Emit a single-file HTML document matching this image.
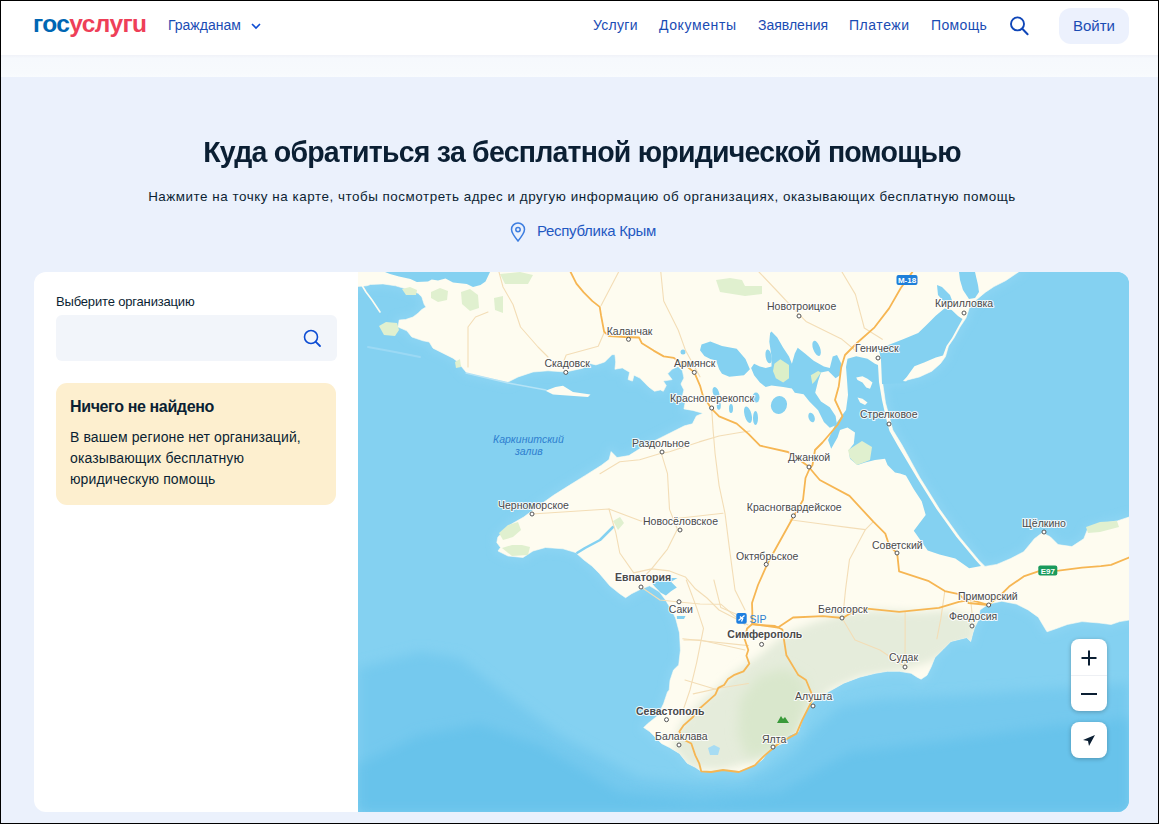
<!DOCTYPE html>
<html><head><meta charset="utf-8">
<style>
*{margin:0;padding:0;box-sizing:border-box}
html,body{width:1159px;height:824px;overflow:hidden}
body{font-family:"Liberation Sans",sans-serif;background:#ebf1fc;position:relative;color:#0b1f33}
.frame{position:absolute;left:0;top:0;width:1159px;height:824px;border:1px solid #000;z-index:50;pointer-events:none}
.hdr{position:absolute;left:0;top:0;width:1159px;height:55px;background:#fff}
.band{position:absolute;left:0;top:55px;width:1159px;height:22px;background:linear-gradient(#f0f2f8,#f6f9fd 15%,#f7fafd 80%,#f9fcfe)}
.logo{position:absolute;left:33px;top:10px;font-weight:bold;font-size:24.5px;letter-spacing:-0.6px;white-space:nowrap}
.logo .b{color:#0066b3}.logo .r{color:#ee3f58}
.nav{position:absolute;top:17px;font-size:14px;color:#1a4cb4;white-space:nowrap}
.btn{position:absolute;left:1059px;top:8px;width:70px;height:36px;border-radius:12px;background:#ecf1fd;color:#1a4cb4;font-size:15px;text-align:center;line-height:36px}
.title{position:absolute;left:0;width:1164px;top:134.5px;text-align:center;font-size:29.5px;font-weight:bold;color:#0b1f33;letter-spacing:-0.8px;transform:scaleX(0.966);transform-origin:582px 0}
.sub{position:absolute;left:0;width:1164px;top:188.5px;text-align:center;font-size:13.4px;color:#0b1f33;letter-spacing:0.54px}
.reg{position:absolute;left:537px;top:222px;font-size:15px;color:#1f58c2;letter-spacing:-0.3px}
.card{position:absolute;left:34px;top:272px;width:1095px;height:540px;background:#fff;border-radius:12px;overflow:hidden}
.lbl{position:absolute;left:56px;top:294px;font-size:13px;color:#0b1f33;letter-spacing:-0.17px}
.inp{position:absolute;left:56px;top:315px;width:281px;height:46px;background:#f2f5fa;border-radius:6px}
.warn{position:absolute;left:56px;top:383px;width:280px;height:122px;background:#fdefcf;border-radius:11px}
.warn h3{position:absolute;left:14px;top:15px;font-size:16px;font-weight:bold;color:#0b1f33;letter-spacing:-0.37px;white-space:nowrap}
.warn p{position:absolute;left:14px;top:44px;font-size:14px;line-height:21px;color:#0b1f33;letter-spacing:0.11px;white-space:nowrap}
.map{position:absolute;left:358px;top:272px;width:771px;height:540px;overflow:hidden;border-radius:0 12px 12px 0;background:#7fcdf0}
.ctl{position:absolute;background:#fff;border-radius:8px;box-shadow:0 1px 4px rgba(0,0,0,.25)}
</style></head><body>
<div class="hdr"></div>
<div class="band"></div>
<div class="logo"><span class="b">гос</span><span class="r">услугu</span></div>
<div class="nav" style="left:168px">Гражданам</div>
<svg style="position:absolute;left:250px;top:21px" width="12" height="10" viewBox="0 0 12 10"><path d="M2 3 L6 7 L10 3" fill="none" stroke="#0d4cd3" stroke-width="1.6"/></svg>
<div class="nav" style="left:593px;letter-spacing:0.3px">Услуги</div>
<div class="nav" style="left:659px;letter-spacing:0.6px">Документы</div>
<div class="nav" style="left:758px">Заявления</div>
<div class="nav" style="left:849px;letter-spacing:0.55px">Платежи</div>
<div class="nav" style="left:931px;letter-spacing:0.35px">Помощь</div>
<svg style="position:absolute;left:1008px;top:14px" width="22" height="22" viewBox="0 0 22 22"><circle cx="9.5" cy="9.9" r="6.5" fill="none" stroke="#0f46b8" stroke-width="1.9"/><path d="M14.3 14.8 L19.6 20.2" stroke="#0f46b8" stroke-width="2" stroke-linecap="round"/></svg>
<div class="btn">Войти</div>

<div class="title">Куда обратиться за бесплатной юридической помощью</div>
<div class="sub">Нажмите на точку на карте, чтобы посмотреть адрес и другую информацию об организациях, оказывающих бесплатную помощь</div>
<svg style="position:absolute;left:509px;top:222px" width="18" height="20" viewBox="0 0 18 20"><path d="M9 19 C5 14 2.5 11 2.5 7.5 A6.5 6.5 0 0 1 15.5 7.5 C15.5 11 13 14 9 19 Z" fill="none" stroke="#3d7ee0" stroke-width="1.5"/><circle cx="9" cy="7.6" r="2.2" fill="none" stroke="#3d7ee0" stroke-width="1.5"/></svg>
<div class="reg">Республика Крым</div>

<div class="card"></div>
<div class="lbl">Выберите организацию</div>
<div class="inp"></div>
<svg style="position:absolute;left:302px;top:328px" width="20" height="20" viewBox="0 0 20 20"><circle cx="9" cy="9" r="6.5" fill="none" stroke="#0d4cd3" stroke-width="1.6"/><path d="M13.8 13.8 L18 18" stroke="#0d4cd3" stroke-width="1.8" stroke-linecap="round"/></svg>
<div class="warn"><h3>Ничего не найдено</h3><p>В вашем регионе нет организаций,<br>оказывающих бесплатную<br>юридическую помощь</p></div>

<div class="map">
<svg width="771" height="540" viewBox="358 272 771 540" style="position:absolute;left:0;top:0" font-family="Liberation Sans, sans-serif">
<defs><filter id="bl" x="-20%" y="-20%" width="140%" height="140%"><feGaussianBlur stdDeviation="6"/></filter><filter id="bl2" x="-20%" y="-20%" width="140%" height="140%"><feGaussianBlur stdDeviation="4"/></filter><filter id="bl3" x="-5%" y="-5%" width="110%" height="110%"><feGaussianBlur stdDeviation="3"/></filter></defs>
<rect x="358" y="272" width="771" height="540" fill="#84d1f1"/>
<polygon points="358.0,668.0 420.0,652.0 460.0,658.0 500.0,690.0 560.0,735.0 640.0,778.0 690.0,783.0 740.0,784.0 770.0,770.0 795.0,752.0 815.0,728.0 840.0,706.0 880.0,699.0 950.0,696.0 1050.0,689.0 1129.0,683.0 1129.0,812.0 358.0,812.0" fill="#75c9ee" filter="url(#bl)"/>
<polygon points="358.0,765.0 420.0,735.0 480.0,724.0 540.0,745.0 620.0,792.0 700.0,800.0 780.0,792.0 850.0,752.0 950.0,740.0 1050.0,726.0 1129.0,718.0 1129.0,812.0 358.0,812.0" fill="#68c3eb" filter="url(#bl)"/>
<polygon points="358.0,272.0 1018.5,272.0 1005.6,280.7 994.0,286.6 985.2,292.4 976.5,299.7 969.2,308.4 966.0,318.0 960.0,327.0 954.0,338.0 948.5,346.0 945.5,356.6 940.6,363.4 931.9,371.2 919.3,377.0 907.6,379.9 906.0,381.0 882.5,382.0 885.5,402.8 892.8,430.0 902.0,445.0 919.8,477.4 939.5,509.1 959.3,536.7 979.0,560.4 985.0,566.4 996.8,564.4 1010.7,558.5 1023.7,551.7 1031.0,542.9 1034.4,538.7 1042.3,532.8 1050.2,536.7 1058.1,544.6 1071.9,546.6 1083.8,538.7 1087.7,528.8 1105.5,522.9 1117.3,520.9 1129.0,517.0 1129.0,620.1 1119.8,621.6 1111.1,624.5 1099.4,623.0 1082.0,621.6 1067.4,624.5 1055.7,628.8 1047.0,631.8 1042.6,624.5 1038.3,617.2 1028.1,609.9 1016.4,604.1 1001.8,601.2 988.7,604.1 980.0,609.9 978.6,619.7 974.6,627.6 972.7,633.6 970.7,641.5 966.7,637.6 958.8,639.5 950.8,641.5 942.9,649.5 934.9,657.4 931.0,667.3 927.0,675.3 921.1,679.2 917.1,677.2 911.1,673.3 899.2,671.3 887.3,671.3 875.4,673.3 859.5,677.2 843.7,683.2 829.8,691.1 818.3,697.9 810.4,703.8 806.4,711.7 802.4,719.7 800.4,725.6 798.5,731.6 788.5,735.6 782.6,743.5 772.7,747.5 766.7,753.4 762.7,759.4 754.8,765.3 738.9,771.3 723.0,769.3 711.1,771.3 701.2,771.3 695.3,767.3 687.3,763.3 679.4,753.4 669.5,747.5 661.5,743.5 655.6,737.5 649.6,731.6 643.7,727.6 647.6,723.7 657.6,715.7 663.5,703.8 667.5,691.9 669.2,690.0 670.0,680.4 673.5,670.0 678.7,664.9 680.4,650.2 679.5,632.9 676.1,620.0 675.3,617.5 671.3,609.6 665.3,599.7 659.4,591.8 649.5,585.8 639.5,589.8 631.6,593.7 625.6,597.7 619.7,593.7 609.8,585.8 599.8,573.9 591.9,566.0 584.0,560.0 575.5,552.5 563.0,548.8 545.5,547.5 533.0,551.0 523.0,557.5 508.0,556.0 498.0,551.0 500.5,547.5 496.8,542.5 497.9,536.9 509.8,525.0 523.7,517.1 539.6,505.2 553.5,495.3 569.4,485.3 585.3,475.4 601.1,465.5 609.1,459.5 611.1,451.6 617.0,457.6 628.9,455.6 644.8,445.6 660.7,437.7 676.5,429.8 684.5,425.8 692.4,423.8 696.4,415.9 702.9,413.3 692.7,410.4 683.9,408.9 685.3,401.6 682.4,395.7 683.9,389.9 680.9,384.0 683.9,378.1 682.4,370.8 678.0,366.4 672.1,369.3 667.7,373.7 672.1,379.6 663.3,381.1 666.3,385.5 663.3,391.3 660.4,389.9 654.5,391.3 648.7,386.9 639.9,378.1 634.0,375.2 632.5,381.1 628.1,379.6 629.6,372.3 622.3,367.9 614.9,369.3 615.7,362.0 614.9,354.7 612.0,354.7 604.7,362.0 595.9,364.9 590.0,363.5 583.0,368.2 565.5,372.0 548.0,370.8 533.0,372.0 518.0,377.0 508.0,382.0 480.0,376.0 466.8,372.9 461.8,367.0 458.0,362.0 453.0,358.2 443.0,353.2 433.0,348.2 429.2,342.0 423.0,340.8 411.8,337.0 406.8,330.8 398.0,327.0 399.2,320.0 405.5,319.5 413.0,317.0 418.0,313.2 421.8,309.5 426.0,307.0 424.2,304.5 421.8,297.0 418.0,293.2 408.0,289.5 395.5,285.8 383.0,283.9 370.5,284.5 366.8,285.8 358.0,286.4" fill="none" stroke="#8bd4f3" stroke-width="9" stroke-linejoin="round" filter="url(#bl3)"/>
<polygon points="358.0,272.0 1018.5,272.0 1005.6,280.7 994.0,286.6 985.2,292.4 976.5,299.7 969.2,308.4 966.0,318.0 960.0,327.0 954.0,338.0 948.5,346.0 945.5,356.6 940.6,363.4 931.9,371.2 919.3,377.0 907.6,379.9 906.0,381.0 882.5,382.0 885.5,402.8 892.8,430.0 902.0,445.0 919.8,477.4 939.5,509.1 959.3,536.7 979.0,560.4 985.0,566.4 996.8,564.4 1010.7,558.5 1023.7,551.7 1031.0,542.9 1034.4,538.7 1042.3,532.8 1050.2,536.7 1058.1,544.6 1071.9,546.6 1083.8,538.7 1087.7,528.8 1105.5,522.9 1117.3,520.9 1129.0,517.0 1129.0,620.1 1119.8,621.6 1111.1,624.5 1099.4,623.0 1082.0,621.6 1067.4,624.5 1055.7,628.8 1047.0,631.8 1042.6,624.5 1038.3,617.2 1028.1,609.9 1016.4,604.1 1001.8,601.2 988.7,604.1 980.0,609.9 978.6,619.7 974.6,627.6 972.7,633.6 970.7,641.5 966.7,637.6 958.8,639.5 950.8,641.5 942.9,649.5 934.9,657.4 931.0,667.3 927.0,675.3 921.1,679.2 917.1,677.2 911.1,673.3 899.2,671.3 887.3,671.3 875.4,673.3 859.5,677.2 843.7,683.2 829.8,691.1 818.3,697.9 810.4,703.8 806.4,711.7 802.4,719.7 800.4,725.6 798.5,731.6 788.5,735.6 782.6,743.5 772.7,747.5 766.7,753.4 762.7,759.4 754.8,765.3 738.9,771.3 723.0,769.3 711.1,771.3 701.2,771.3 695.3,767.3 687.3,763.3 679.4,753.4 669.5,747.5 661.5,743.5 655.6,737.5 649.6,731.6 643.7,727.6 647.6,723.7 657.6,715.7 663.5,703.8 667.5,691.9 669.2,690.0 670.0,680.4 673.5,670.0 678.7,664.9 680.4,650.2 679.5,632.9 676.1,620.0 675.3,617.5 671.3,609.6 665.3,599.7 659.4,591.8 649.5,585.8 639.5,589.8 631.6,593.7 625.6,597.7 619.7,593.7 609.8,585.8 599.8,573.9 591.9,566.0 584.0,560.0 575.5,552.5 563.0,548.8 545.5,547.5 533.0,551.0 523.0,557.5 508.0,556.0 498.0,551.0 500.5,547.5 496.8,542.5 497.9,536.9 509.8,525.0 523.7,517.1 539.6,505.2 553.5,495.3 569.4,485.3 585.3,475.4 601.1,465.5 609.1,459.5 611.1,451.6 617.0,457.6 628.9,455.6 644.8,445.6 660.7,437.7 676.5,429.8 684.5,425.8 692.4,423.8 696.4,415.9 702.9,413.3 692.7,410.4 683.9,408.9 685.3,401.6 682.4,395.7 683.9,389.9 680.9,384.0 683.9,378.1 682.4,370.8 678.0,366.4 672.1,369.3 667.7,373.7 672.1,379.6 663.3,381.1 666.3,385.5 663.3,391.3 660.4,389.9 654.5,391.3 648.7,386.9 639.9,378.1 634.0,375.2 632.5,381.1 628.1,379.6 629.6,372.3 622.3,367.9 614.9,369.3 615.7,362.0 614.9,354.7 612.0,354.7 604.7,362.0 595.9,364.9 590.0,363.5 583.0,368.2 565.5,372.0 548.0,370.8 533.0,372.0 518.0,377.0 508.0,382.0 480.0,376.0 466.8,372.9 461.8,367.0 458.0,362.0 453.0,358.2 443.0,353.2 433.0,348.2 429.2,342.0 423.0,340.8 411.8,337.0 406.8,330.8 398.0,327.0 399.2,320.0 405.5,319.5 413.0,317.0 418.0,313.2 421.8,309.5 426.0,307.0 424.2,304.5 421.8,297.0 418.0,293.2 408.0,289.5 395.5,285.8 383.0,283.9 370.5,284.5 366.8,285.8 358.0,286.4" fill="#fefcf0" stroke="#fefcf0" stroke-width="0.6" stroke-linejoin="round"/>
<polygon points="385.0,272.0 390.0,274.0 399.0,276.5 410.5,279.0 416.8,282.0 428.0,281.5 431.8,279.5 438.0,280.5 445.5,278.5 453.0,282.5 466.8,284.0 473.0,287.0 480.5,285.0 485.5,281.5 490.0,272.0" fill="#84d1f1" />
<polygon points="701.5,344.4 710.3,341.5 722.0,345.9 736.7,348.8 745.5,359.1 749.9,369.3 744.0,375.2 729.3,376.7 722.0,373.7 719.1,369.3 716.1,360.5 710.3,359.1 704.4,356.1 700.0,350.3" fill="#84d1f1" />
<polygon points="771.5,331.6 777.3,337.5 783.2,347.7 789.0,356.4 791.9,363.7 794.8,353.5 797.7,347.7 805.0,353.5 813.7,360.8 823.9,366.6 829.8,368.0 832.7,356.4 837.0,355.0 841.4,363.7 840.0,375.3 835.6,378.2 828.3,371.0 821.0,372.4 818.1,381.1 815.2,392.8 821.0,401.5 829.8,407.3 835.6,416.1 837.0,424.8 829.8,427.7 823.9,421.9 818.1,410.3 809.4,401.5 803.6,394.2 794.8,392.8 791.9,388.4 783.2,387.0 771.5,385.5 765.7,387.0 759.9,382.6 754.1,375.3 751.1,368.0 754.1,363.7 759.9,366.6 765.7,368.0 771.5,366.6 771.5,356.4 769.3,341.8 770.1,333.1" fill="#84d1f1" />
<polygon points="847.5,358.8 856.2,356.2 867.5,358.8 875.0,363.8 878.0,365.0 879.0,382.0 882.0,400.0 886.0,418.0 889.5,431.0 898.0,446.0 916.8,477.4 936.5,509.1 956.3,536.7 976.0,560.4 981.0,566.0 969.2,568.3 955.3,558.5 939.5,554.5 927.7,550.6 913.8,530.8 925.7,515.0 921.7,501.2 913.8,489.3 905.9,475.5 900.0,473.5 895.0,472.5 887.5,465.0 885.0,458.8 875.0,460.0 865.0,462.5 857.5,465.0 850.0,458.8 848.8,450.0 853.8,443.8 855.0,432.5 847.5,427.5 840.0,430.0 837.5,437.5 831.2,448.8 828.0,440.0 835.0,425.0 846.0,410.0 848.0,395.0 847.0,380.0 846.0,367.0" fill="#84d1f1" />
<polygon points="889.1,344.8 903.7,339.0 918.2,333.1 927.0,324.4 935.7,315.7 944.4,308.4 951.7,310.0 958.0,316.0 962.5,319.0 958.0,327.0 952.0,338.0 946.5,346.0 943.0,355.6 935.8,357.6 924.1,362.4 914.4,366.3 906.7,377.0 903.0,381.0 909.0,383.0 882.0,384.0 881.0,360.0 879.0,350.0" fill="#84d1f1" />
<polygon points="959.0,272.0 975.0,272.0 978.0,285.0 979.0,292.0 975.0,298.0 969.0,299.0 963.0,290.0 960.0,280.0" fill="#84d1f1" />
<polygon points="937.0,285.0 942.0,287.0 950.0,295.0 953.0,303.0 945.0,303.0 938.0,295.0" fill="#84d1f1" />
<ellipse cx="768.6" cy="356.4" rx="3" ry="7" transform="rotate(-10 768.6 356.4)" fill="#84d1f1"/>
<ellipse cx="816.6" cy="348.4" rx="3.5" ry="8" transform="rotate(-20 816.6 348.4)" fill="#84d1f1"/>
<ellipse cx="779" cy="405" rx="8" ry="9" transform="rotate(20 779 405)" fill="#84d1f1"/>
<ellipse cx="756" cy="397.6" rx="3.5" ry="5" transform="rotate(0 756 397.6)" fill="#84d1f1"/>
<ellipse cx="748" cy="414.7" rx="3.5" ry="8.5" transform="rotate(-15 748 414.7)" fill="#84d1f1"/>
<ellipse cx="755.5" cy="418" rx="2.5" ry="7" transform="rotate(0 755.5 418)" fill="#84d1f1"/>
<ellipse cx="716" cy="392.8" rx="3" ry="6" transform="rotate(-20 716 392.8)" fill="#84d1f1"/>
<ellipse cx="718.8" cy="405.8" rx="2" ry="4" transform="rotate(0 718.8 405.8)" fill="#84d1f1"/>
<ellipse cx="731" cy="408.5" rx="2" ry="4.5" transform="rotate(0 731 408.5)" fill="#84d1f1"/>
<ellipse cx="811.6" cy="417.5" rx="3" ry="5" transform="rotate(-20 811.6 417.5)" fill="#84d1f1"/>
<ellipse cx="683" cy="352" rx="2.5" ry="2.5" transform="rotate(0 683 352)" fill="#84d1f1"/>
<polygon points="545.5,390.8 555.5,387.0 563.0,385.8 573.0,392.0 590.5,394.5 588.0,397.0 570.5,395.8 553.0,394.5" fill="#fefcf0" />
<polygon points="774.4,363.7 780.3,359.3 789.0,365.1 789.0,378.2 783.2,382.6 775.9,378.2 773.0,371.0" fill="#dcefc8" />
<polygon points="810.8,375.3 818.1,371.0 821.0,372.4 815.2,381.1 812.3,384.1" fill="#dcefc8" />
<polygon points="856.2,377.5 862.5,376.2 867.5,378.8 872.5,382.5 870.0,388.8 866.2,387.5 862.5,382.5 857.5,380.0" fill="#fefcf0" />
<polygon points="857.5,397.5 862.5,398.8 867.5,402.5 865.0,405.0 860.0,402.5" fill="#fefcf0" />
<clipPath id="lc"><polygon points="358.0,272.0 1018.5,272.0 1005.6,280.7 994.0,286.6 985.2,292.4 976.5,299.7 969.2,308.4 966.0,318.0 960.0,327.0 954.0,338.0 948.5,346.0 945.5,356.6 940.6,363.4 931.9,371.2 919.3,377.0 907.6,379.9 906.0,381.0 882.5,382.0 885.5,402.8 892.8,430.0 902.0,445.0 919.8,477.4 939.5,509.1 959.3,536.7 979.0,560.4 985.0,566.4 996.8,564.4 1010.7,558.5 1023.7,551.7 1031.0,542.9 1034.4,538.7 1042.3,532.8 1050.2,536.7 1058.1,544.6 1071.9,546.6 1083.8,538.7 1087.7,528.8 1105.5,522.9 1117.3,520.9 1129.0,517.0 1129.0,620.1 1119.8,621.6 1111.1,624.5 1099.4,623.0 1082.0,621.6 1067.4,624.5 1055.7,628.8 1047.0,631.8 1042.6,624.5 1038.3,617.2 1028.1,609.9 1016.4,604.1 1001.8,601.2 988.7,604.1 980.0,609.9 978.6,619.7 974.6,627.6 972.7,633.6 970.7,641.5 966.7,637.6 958.8,639.5 950.8,641.5 942.9,649.5 934.9,657.4 931.0,667.3 927.0,675.3 921.1,679.2 917.1,677.2 911.1,673.3 899.2,671.3 887.3,671.3 875.4,673.3 859.5,677.2 843.7,683.2 829.8,691.1 818.3,697.9 810.4,703.8 806.4,711.7 802.4,719.7 800.4,725.6 798.5,731.6 788.5,735.6 782.6,743.5 772.7,747.5 766.7,753.4 762.7,759.4 754.8,765.3 738.9,771.3 723.0,769.3 711.1,771.3 701.2,771.3 695.3,767.3 687.3,763.3 679.4,753.4 669.5,747.5 661.5,743.5 655.6,737.5 649.6,731.6 643.7,727.6 647.6,723.7 657.6,715.7 663.5,703.8 667.5,691.9 669.2,690.0 670.0,680.4 673.5,670.0 678.7,664.9 680.4,650.2 679.5,632.9 676.1,620.0 675.3,617.5 671.3,609.6 665.3,599.7 659.4,591.8 649.5,585.8 639.5,589.8 631.6,593.7 625.6,597.7 619.7,593.7 609.8,585.8 599.8,573.9 591.9,566.0 584.0,560.0 575.5,552.5 563.0,548.8 545.5,547.5 533.0,551.0 523.0,557.5 508.0,556.0 498.0,551.0 500.5,547.5 496.8,542.5 497.9,536.9 509.8,525.0 523.7,517.1 539.6,505.2 553.5,495.3 569.4,485.3 585.3,475.4 601.1,465.5 609.1,459.5 611.1,451.6 617.0,457.6 628.9,455.6 644.8,445.6 660.7,437.7 676.5,429.8 684.5,425.8 692.4,423.8 696.4,415.9 702.9,413.3 692.7,410.4 683.9,408.9 685.3,401.6 682.4,395.7 683.9,389.9 680.9,384.0 683.9,378.1 682.4,370.8 678.0,366.4 672.1,369.3 667.7,373.7 672.1,379.6 663.3,381.1 666.3,385.5 663.3,391.3 660.4,389.9 654.5,391.3 648.7,386.9 639.9,378.1 634.0,375.2 632.5,381.1 628.1,379.6 629.6,372.3 622.3,367.9 614.9,369.3 615.7,362.0 614.9,354.7 612.0,354.7 604.7,362.0 595.9,364.9 590.0,363.5 583.0,368.2 565.5,372.0 548.0,370.8 533.0,372.0 518.0,377.0 508.0,382.0 480.0,376.0 466.8,372.9 461.8,367.0 458.0,362.0 453.0,358.2 443.0,353.2 433.0,348.2 429.2,342.0 423.0,340.8 411.8,337.0 406.8,330.8 398.0,327.0 399.2,320.0 405.5,319.5 413.0,317.0 418.0,313.2 421.8,309.5 426.0,307.0 424.2,304.5 421.8,297.0 418.0,293.2 408.0,289.5 395.5,285.8 383.0,283.9 370.5,284.5 366.8,285.8 358.0,286.4"/></clipPath><g clip-path="url(#lc)">
<polygon points="672.0,748.0 680.0,725.0 700.0,702.0 715.0,690.0 735.0,672.0 760.0,655.0 775.0,642.0 790.0,632.0 815.0,622.0 850.0,612.0 880.0,610.0 920.0,612.0 950.0,610.0 975.0,618.0 975.0,640.0 930.0,662.0 900.0,671.0 860.0,677.0 830.0,690.0 806.0,712.0 798.0,732.0 760.0,760.0 720.0,770.0 690.0,768.0" fill="#e5ecdb" filter="url(#bl2)"/>
<polygon points="740.0,700.0 758.0,676.0 785.0,668.0 805.0,680.0 806.0,705.0 795.0,735.0 770.0,752.0 748.0,758.0 738.0,735.0" fill="#d9e7cc" filter="url(#bl)"/>
</g>
<polygon points="402.0,289.0 410.0,287.0 417.0,290.0 416.0,295.0 406.0,295.0" fill="#e0f0cf" />
<polygon points="431.0,292.0 440.0,288.0 448.0,291.0 447.0,300.0 438.0,302.0 431.0,298.0" fill="#e0f0cf" />
<polygon points="461.0,292.0 470.0,289.0 478.0,295.0 479.0,308.0 470.0,311.0 462.0,304.0" fill="#e0f0cf" />
<polygon points="494.0,298.0 503.0,296.0 503.0,313.0 495.0,310.0" fill="#e0f0cf" />
<polygon points="500.0,274.0 520.0,272.0 533.0,275.0 528.0,284.0 505.0,284.0" fill="#e0f0cf" />
<polygon points="379.0,326.0 386.0,322.0 397.0,323.0 399.0,330.0 395.0,336.0 384.0,335.0" fill="#e0f0cf" />
<polygon points="455.0,362.0 460.0,359.0 461.0,367.0 456.0,368.0" fill="#e0f0cf" />
<polygon points="716.0,280.0 730.0,278.0 742.0,280.0 745.0,286.0 762.0,286.0 762.0,294.0 745.0,296.0 720.0,292.0" fill="#e0f0cf" />
<polygon points="848.0,450.0 862.0,441.0 872.0,447.0 870.0,460.0 857.0,465.0 850.0,458.0" fill="#e0f0cf" />
<polygon points="1086.0,527.0 1100.0,522.0 1117.0,521.0 1119.0,527.0 1100.0,532.0 1088.0,533.0" fill="#e0f0cf" />
<polygon points="499.0,533.0 508.0,525.0 518.0,522.0 521.0,530.0 513.0,537.0 503.0,540.0" fill="#e0f0cf" />
<polygon points="502.0,548.0 512.0,545.0 522.0,545.0 530.0,547.0 528.0,555.0 512.0,556.0" fill="#e0f0cf" />
<polygon points="613.0,521.0 620.0,517.0 624.0,523.0 618.0,530.0" fill="#e0f0cf" />
<polygon points="652.0,583.2 657.8,578.1 677.5,578.1 671.0,581.7 676.8,587.6 671.0,591.2 665.9,595.6 660.8,592.7 654.9,586.8" fill="#84d1f1" />
<polygon points="676.8,616.0 685.5,616.0 684.0,619.0 677.0,619.0" fill="#84d1f1" />
<polyline points="613.0,527.0 600.0,540.0 585.0,548.0 577.3,552.8" fill="none" stroke="#84d1f1" stroke-width="2.5" stroke-linejoin="round" stroke-linecap="round" />
<polygon points="708.0,748.0 714.0,745.0 720.0,748.0 718.0,755.0 710.0,755.0" fill="#a7dcf3" />
<polyline points="360.0,282.0 366.0,292.0 372.0,300.0 380.0,312.0" fill="none" stroke="#fefcf0" stroke-width="1.6" stroke-linejoin="round" stroke-linecap="round" />
<polyline points="368.0,347.0 395.0,352.0 420.0,357.0" fill="none" stroke="#9bd9f4" stroke-width="2" stroke-linejoin="round" stroke-linecap="round" />
<polyline points="466.0,373.0 508.0,383.0 546.0,390.0" fill="none" stroke="#b5e3f6" stroke-width="1.3" stroke-linejoin="round" stroke-linecap="round" />
<polyline points="618.6,272.0 601.1,305.5" fill="none" stroke="#f3ddb6" stroke-width="1.1" stroke-linejoin="round" stroke-linecap="round" />
<polyline points="604.0,333.0 598.2,346.2 566.2,355.0 563.3,362.3" fill="none" stroke="#f3ddb6" stroke-width="1.1" stroke-linejoin="round" stroke-linecap="round" />
<polyline points="499.0,272.0 503.0,287.0 513.0,304.5 520.5,327.0 538.0,347.0 548.0,357.0" fill="none" stroke="#f3ddb6" stroke-width="1.1" stroke-linejoin="round" stroke-linecap="round" />
<polyline points="488.0,312.0 475.5,317.0 468.0,327.0 468.0,367.0" fill="none" stroke="#f3ddb6" stroke-width="1.1" stroke-linejoin="round" stroke-linecap="round" />
<polyline points="660.8,272.0 663.7,301.0 678.3,330.2 685.6,350.6 700.0,376.8" fill="none" stroke="#f3ddb6" stroke-width="1.1" stroke-linejoin="round" stroke-linecap="round" />
<polyline points="759.0,272.0 778.0,292.0 797.0,312.4 806.0,321.4 842.0,339.3 855.4,350.5" fill="none" stroke="#f3ddb6" stroke-width="1.1" stroke-linejoin="round" stroke-linecap="round" />
<polyline points="842.0,272.0 855.4,294.4 864.3,328.0 882.3,339.3" fill="none" stroke="#f3ddb6" stroke-width="1.1" stroke-linejoin="round" stroke-linecap="round" />
<polyline points="711.7,408.9 713.1,430.0 715.1,453.8 719.1,485.6 725.0,513.3 729.0,545.1 735.0,590.0 745.0,610.0" fill="none" stroke="#f3ddb6" stroke-width="1.1" stroke-linejoin="round" stroke-linecap="round" />
<polyline points="661.5,453.8 667.5,473.7 669.5,509.4 677.4,529.2 667.5,549.1 651.6,568.9 639.7,580.8" fill="none" stroke="#f3ddb6" stroke-width="1.1" stroke-linejoin="round" stroke-linecap="round" />
<polyline points="600.0,473.7 619.8,461.8 639.7,459.8 659.5,453.8 669.5,451.8 699.2,441.9 719.1,436.0 742.9,432.0 750.0,431.0" fill="none" stroke="#f3ddb6" stroke-width="1.1" stroke-linejoin="round" stroke-linecap="round" />
<polyline points="532.0,514.0 609.0,509.0 640.8,521.0 669.5,519.3 723.0,513.3" fill="none" stroke="#f3ddb6" stroke-width="1.1" stroke-linejoin="round" stroke-linecap="round" />
<polyline points="609.0,509.0 615.9,533.2 619.8,553.0 633.7,572.9 651.6,568.9 669.5,570.9 685.3,576.9 695.3,588.8 707.0,598.0 719.0,610.0 748.0,625.0" fill="none" stroke="#f3ddb6" stroke-width="1.1" stroke-linejoin="round" stroke-linecap="round" />
<polyline points="790.0,519.7 819.8,523.7 849.5,527.6 865.4,529.6 873.3,521.7" fill="none" stroke="#f3ddb6" stroke-width="1.1" stroke-linejoin="round" stroke-linecap="round" />
<polyline points="865.4,529.6 849.5,559.4 845.6,589.1 843.6,609.0" fill="none" stroke="#f3ddb6" stroke-width="1.1" stroke-linejoin="round" stroke-linecap="round" />
<polyline points="641.0,587.0 660.0,600.0 679.0,602.0 700.0,604.0 720.8,604.2 745.0,624.9" fill="none" stroke="#f3ddb6" stroke-width="1.1" stroke-linejoin="round" stroke-linecap="round" />
<polyline points="682.8,638.7 748.4,645.6" fill="none" stroke="#f3ddb6" stroke-width="1.1" stroke-linejoin="round" stroke-linecap="round" />
<polyline points="693.2,693.9 720.0,688.0 748.4,683.5" fill="none" stroke="#f3ddb6" stroke-width="1.1" stroke-linejoin="round" stroke-linecap="round" />
<polyline points="686.3,580.0 696.6,607.6 703.5,628.3 696.6,662.8 690.0,690.0 682.8,711.1" fill="none" stroke="#f3ddb6" stroke-width="1.1" stroke-linejoin="round" stroke-linecap="round" />
<polyline points="713.9,580.0 720.8,607.6 745.0,618.0" fill="none" stroke="#f3ddb6" stroke-width="1.1" stroke-linejoin="round" stroke-linecap="round" />
<polyline points="684.0,640.0 700.0,640.0 745.0,650.0" fill="none" stroke="#f3ddb6" stroke-width="1.1" stroke-linejoin="round" stroke-linecap="round" />
<polyline points="685.0,680.0 718.0,690.0" fill="none" stroke="#f3ddb6" stroke-width="1.1" stroke-linejoin="round" stroke-linecap="round" />
<polyline points="842.0,618.0 855.0,640.0 880.0,650.0 905.0,667.0" fill="none" stroke="#f3ddb6" stroke-width="1.1" stroke-linejoin="round" stroke-linecap="round" />
<polyline points="905.1,612.0 905.1,638.8 905.0,667.0" fill="none" stroke="#f3ddb6" stroke-width="1.1" stroke-linejoin="round" stroke-linecap="round" />
<polyline points="944.8,591.1 940.8,618.9 936.9,638.8" fill="none" stroke="#f3ddb6" stroke-width="1.1" stroke-linejoin="round" stroke-linecap="round" />
<polyline points="970.6,599.0 972.6,618.9" fill="none" stroke="#f3ddb6" stroke-width="1.1" stroke-linejoin="round" stroke-linecap="round" />
<polyline points="570.6,272.0 576.4,283.6 583.7,292.4 592.4,301.1 599.7,306.9 601.1,315.7 604.1,331.7 609.0,336.0 625.0,337.0 639.0,337.5 641.9,343.3 653.6,350.6 663.7,356.4 673.9,357.9 685.6,365.2 694.3,372.4 700.0,385.6 702.9,395.7 711.7,408.9 719.1,416.3 736.7,423.6 748.4,433.9 760.0,445.6 788.0,452.0 808.0,466.0" fill="none" stroke="#f6b653" stroke-width="1.8" stroke-linejoin="round" stroke-linecap="round" />
<polyline points="912.4,272.0 900.8,288.0 889.1,308.4 874.6,327.3 857.5,342.5 845.0,355.0 841.2,367.5 838.8,386.2 835.0,400.0 842.5,416.2 837.5,425.0 822.5,442.5 815.0,450.0 812.5,465.0 809.0,470.0 805.5,478.0 803.0,500.0 793.0,517.5 780.5,540.0 768.0,562.5 758.0,585.0 752.0,603.0 752.3,612.0 752.3,624.0 747.1,628.5 744.5,638.8 748.3,650.0 746.4,655.8 749.3,663.6 743.5,671.4 733.8,675.2 728.0,679.1 724.1,685.0 718.3,687.9 715.3,694.7 706.6,702.4 698.8,709.2 693.0,717.0 683.3,725.7 679.4,731.6 683.3,739.5 691.3,743.5 695.3,755.4 699.2,763.3 701.2,771.3 711.1,772.0 723.0,770.0 738.9,772.0 754.8,765.3 764.7,755.4 778.6,743.5 796.5,733.6 802.4,719.7 810.4,703.8 813.0,697.0 806.0,680.0 798.3,675.1 786.4,655.3 782.4,629.5 775.0,626.0 760.0,625.0 752.3,624.0" fill="none" stroke="#f6b653" stroke-width="1.8" stroke-linejoin="round" stroke-linecap="round" />
<polyline points="808.0,466.0 815.5,475.0 819.8,480.0 849.5,495.9 873.3,521.7 885.3,533.6 889.2,545.5 897.2,553.4 899.1,571.3 928.9,581.2 944.8,591.1 958.7,594.1 968.6,603.0 988.5,605.0 1001.8,593.9 1009.1,586.6 1023.7,576.4 1038.3,571.3 1058.6,570.6 1082.0,567.7 1100.9,566.2 1111.1,564.8 1129.0,557.5" fill="none" stroke="#f6b653" stroke-width="1.8" stroke-linejoin="round" stroke-linecap="round" />
<polyline points="752.3,624.0 778.0,627.5 793.0,617.5 823.0,616.2 842.7,618.0 859.5,607.8 899.2,611.8 938.9,607.8 958.8,601.8 970.7,599.8 988.7,605.0" fill="none" stroke="#f6b653" stroke-width="1.8" stroke-linejoin="round" stroke-linecap="round" />
<text x="767" y="310" font-size="10.5" font-weight="normal" fill="#4a4a4a" stroke="#ffffff" stroke-width="2.2" stroke-opacity="0.85" paint-order="stroke" stroke-linejoin="round">Новотроицкое</text>
<circle cx="799" cy="316" r="2" fill="#fff" stroke="#555" stroke-width="1"/>
<text x="935" y="307" font-size="10.5" font-weight="normal" fill="#4a4a4a" stroke="#ffffff" stroke-width="2.2" stroke-opacity="0.85" paint-order="stroke" stroke-linejoin="round">Кирилловка</text>
<circle cx="964" cy="313" r="2" fill="#fff" stroke="#555" stroke-width="1"/>
<text x="606.7" y="334.6" font-size="10.5" font-weight="normal" fill="#4a4a4a" stroke="#ffffff" stroke-width="2.2" stroke-opacity="0.85" paint-order="stroke" stroke-linejoin="round">Каланчак</text>
<circle cx="628.5" cy="339.3" r="2" fill="#fff" stroke="#555" stroke-width="1"/>
<text x="544.4" y="367.4" font-size="10.5" font-weight="normal" fill="#4a4a4a" stroke="#ffffff" stroke-width="2.2" stroke-opacity="0.85" paint-order="stroke" stroke-linejoin="round">Скадовск</text>
<circle cx="565.8" cy="372.4" r="2" fill="#fff" stroke="#555" stroke-width="1"/>
<text x="673.9" y="367.4" font-size="10.5" font-weight="normal" fill="#4a4a4a" stroke="#ffffff" stroke-width="2.2" stroke-opacity="0.85" paint-order="stroke" stroke-linejoin="round">Армянск</text>
<circle cx="694.3" cy="372.4" r="2" fill="#fff" stroke="#555" stroke-width="1"/>
<text x="855" y="352" font-size="10.5" font-weight="normal" fill="#4a4a4a" stroke="#ffffff" stroke-width="2.2" stroke-opacity="0.85" paint-order="stroke" stroke-linejoin="round">Геническ</text>
<circle cx="878" cy="358" r="2" fill="#fff" stroke="#555" stroke-width="1"/>
<text x="670" y="402" font-size="10.5" font-weight="normal" fill="#4a4a4a" stroke="#ffffff" stroke-width="2.2" stroke-opacity="0.85" paint-order="stroke" stroke-linejoin="round">Красноперекопск</text>
<circle cx="711.7" cy="408" r="2" fill="#fff" stroke="#555" stroke-width="1"/>
<text x="860" y="418" font-size="10.5" font-weight="normal" fill="#4a4a4a" stroke="#ffffff" stroke-width="2.2" stroke-opacity="0.85" paint-order="stroke" stroke-linejoin="round">Стрелковое</text>
<circle cx="889" cy="424" r="2" fill="#fff" stroke="#555" stroke-width="1"/>
<text x="632" y="447" font-size="10.5" font-weight="normal" fill="#4a4a4a" stroke="#ffffff" stroke-width="2.2" stroke-opacity="0.85" paint-order="stroke" stroke-linejoin="round">Раздольное</text>
<circle cx="662" cy="452" r="2" fill="#fff" stroke="#555" stroke-width="1"/>
<text x="788" y="461" font-size="10.5" font-weight="normal" fill="#4a4a4a" stroke="#ffffff" stroke-width="2.2" stroke-opacity="0.85" paint-order="stroke" stroke-linejoin="round">Джанкой</text>
<circle cx="809" cy="467" r="2" fill="#fff" stroke="#555" stroke-width="1"/>
<text x="498" y="509" font-size="10.5" font-weight="normal" fill="#4a4a4a" stroke="#ffffff" stroke-width="2.2" stroke-opacity="0.85" paint-order="stroke" stroke-linejoin="round">Черноморское</text>
<circle cx="532" cy="514" r="2" fill="#fff" stroke="#555" stroke-width="1"/>
<text x="643" y="525" font-size="10.5" font-weight="normal" fill="#4a4a4a" stroke="#ffffff" stroke-width="2.2" stroke-opacity="0.85" paint-order="stroke" stroke-linejoin="round">Новосёловское</text>
<circle cx="680" cy="530" r="2" fill="#fff" stroke="#555" stroke-width="1"/>
<text x="746.8" y="511" font-size="10.5" font-weight="normal" fill="#4a4a4a" stroke="#ffffff" stroke-width="2.2" stroke-opacity="0.85" paint-order="stroke" stroke-linejoin="round">Красногвардейское</text>
<circle cx="793.4" cy="515.9" r="2" fill="#fff" stroke="#555" stroke-width="1"/>
<text x="1022" y="527" font-size="10.5" font-weight="normal" fill="#4a4a4a" stroke="#ffffff" stroke-width="2.2" stroke-opacity="0.85" paint-order="stroke" stroke-linejoin="round">Щёлкино</text>
<circle cx="1044" cy="532" r="2" fill="#fff" stroke="#555" stroke-width="1"/>
<text x="872" y="549" font-size="10.5" font-weight="normal" fill="#4a4a4a" stroke="#ffffff" stroke-width="2.2" stroke-opacity="0.85" paint-order="stroke" stroke-linejoin="round">Советский</text>
<circle cx="897" cy="553" r="2" fill="#fff" stroke="#555" stroke-width="1"/>
<text x="736" y="559.6" font-size="10.5" font-weight="normal" fill="#4a4a4a" stroke="#ffffff" stroke-width="2.2" stroke-opacity="0.85" paint-order="stroke" stroke-linejoin="round">Октябрьское</text>
<circle cx="766.2" cy="564.4" r="2" fill="#fff" stroke="#555" stroke-width="1"/>
<text x="615" y="581" font-size="10.5" font-weight="bold" fill="#4a4a4a" stroke="#ffffff" stroke-width="2.2" stroke-opacity="0.85" paint-order="stroke" stroke-linejoin="round">Евпатория</text>
<circle cx="641" cy="587" r="2" fill="#fff" stroke="#555" stroke-width="1"/>
<text x="958" y="600" font-size="10.5" font-weight="normal" fill="#4a4a4a" stroke="#ffffff" stroke-width="2.2" stroke-opacity="0.85" paint-order="stroke" stroke-linejoin="round">Приморский</text>
<circle cx="988.7" cy="605" r="2" fill="#fff" stroke="#555" stroke-width="1"/>
<text x="668.8" y="613" font-size="10.5" font-weight="normal" fill="#4a4a4a" stroke="#ffffff" stroke-width="2.2" stroke-opacity="0.85" paint-order="stroke" stroke-linejoin="round">Саки</text>
<circle cx="679" cy="601.8" r="2" fill="#fff" stroke="#555" stroke-width="1"/>
<text x="818" y="613" font-size="10.5" font-weight="normal" fill="#4a4a4a" stroke="#ffffff" stroke-width="2.2" stroke-opacity="0.85" paint-order="stroke" stroke-linejoin="round">Белогорск</text>
<circle cx="842" cy="618" r="2" fill="#fff" stroke="#555" stroke-width="1"/>
<text x="949" y="620" font-size="10.5" font-weight="normal" fill="#4a4a4a" stroke="#ffffff" stroke-width="2.2" stroke-opacity="0.85" paint-order="stroke" stroke-linejoin="round">Феодосия</text>
<circle cx="972" cy="626" r="2" fill="#fff" stroke="#555" stroke-width="1"/>
<text x="727.3" y="637.5" font-size="10.5" font-weight="bold" fill="#4a4a4a" stroke="#ffffff" stroke-width="2.2" stroke-opacity="0.85" paint-order="stroke" stroke-linejoin="round">Симферополь</text>
<circle cx="761.6" cy="644.4" r="2" fill="#fff" stroke="#555" stroke-width="1"/>
<text x="889" y="661" font-size="10.5" font-weight="normal" fill="#4a4a4a" stroke="#ffffff" stroke-width="2.2" stroke-opacity="0.85" paint-order="stroke" stroke-linejoin="round">Судак</text>
<circle cx="905" cy="667" r="2" fill="#fff" stroke="#555" stroke-width="1"/>
<text x="795" y="700" font-size="10.5" font-weight="normal" fill="#4a4a4a" stroke="#ffffff" stroke-width="2.2" stroke-opacity="0.85" paint-order="stroke" stroke-linejoin="round">Алушта</text>
<circle cx="813" cy="706" r="2" fill="#fff" stroke="#555" stroke-width="1"/>
<text x="636" y="715" font-size="10.5" font-weight="bold" fill="#4a4a4a" stroke="#ffffff" stroke-width="2.2" stroke-opacity="0.85" paint-order="stroke" stroke-linejoin="round">Севастополь</text>
<circle cx="666.5" cy="719.7" r="2" fill="#fff" stroke="#555" stroke-width="1"/>
<text x="655" y="740" font-size="10.5" font-weight="normal" fill="#4a4a4a" stroke="#ffffff" stroke-width="2.2" stroke-opacity="0.85" paint-order="stroke" stroke-linejoin="round">Балаклава</text>
<circle cx="679" cy="745" r="2" fill="#fff" stroke="#555" stroke-width="1"/>
<text x="762" y="743" font-size="10.5" font-weight="normal" fill="#4a4a4a" stroke="#ffffff" stroke-width="2.2" stroke-opacity="0.85" paint-order="stroke" stroke-linejoin="round">Ялта</text>
<circle cx="773" cy="747" r="2" fill="#fff" stroke="#555" stroke-width="1"/>
<text x="493" y="443" font-size="10.5" font-style="italic" fill="#2f7fcf">Каркинитский</text>
<text x="515" y="455" font-size="10.5" font-style="italic" fill="#2f7fcf">залив</text>
<rect x="896.5" y="275" width="21" height="10" rx="2" fill="#1e7fd9"/><text x="907" y="283" font-size="8" font-weight="bold" fill="#fff" text-anchor="middle">M-18</text>
<rect x="1038.3" y="565.4" width="19" height="10" rx="2" fill="#1a9a5c"/><text x="1047.8" y="573.5" font-size="8" font-weight="bold" fill="#fff" text-anchor="middle">E97</text>
<rect x="736.3" y="613" width="10.4" height="10.7" rx="2" fill="#1e7fe0"/><path d="M738.5 620.5 L744.5 615.5 M740 616.5 L742.5 619 M741.5 621.5 L743 618" stroke="#fff" stroke-width="1.3"/>
<text x="749.5" y="622.5" font-size="10.5" fill="#2f7fcf">SIP</text>
<path d="M777 723 L781 716 L783 719 L785 717 L789 723 Z" fill="#3a9a3a"/>
</svg>
</div>
<div class="ctl" style="left:1071px;top:639px;width:36px;height:72px"></div>
<svg style="position:absolute;left:1071px;top:639px" width="36" height="72" viewBox="0 0 36 72"><path d="M18 11.5 V26.5 M10.5 19 H25.5" stroke="#0b1f33" stroke-width="2"/><path d="M10 55 H26" stroke="#0b1f33" stroke-width="2"/><path d="M0 36.5 H36" stroke="#eef0f4" stroke-width="1"/></svg>
<div class="ctl" style="left:1071px;top:722px;width:36px;height:36px"></div>
<svg style="position:absolute;left:1071px;top:722px" width="36" height="36" viewBox="0 0 36 36"><path d="M24 13 L12 18 L17 19 L18 24 Z" fill="#0b1f33"/></svg>
<div class="frame"></div>
</body></html>
